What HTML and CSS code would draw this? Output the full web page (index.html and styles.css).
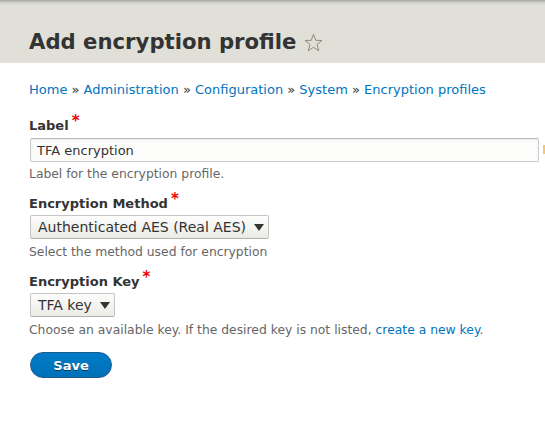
FILE: index.html
```html
<!DOCTYPE html>
<html>
<head>
<meta charset="utf-8">
<link rel="stylesheet" href="styles.css">
</head>
<body>
<header class="page-header">
  <h1 class="page-title">Add encryption profile <span class="star"><svg width="19" height="20" viewBox="0 0 19 20"><path d="M9.5 1.2 L11.7 7.3 L17.9 7.5 L13 11.4 L14.8 17.9 L9.5 14.2 L4.2 17.9 L6 11.4 L1.1 7.5 L7.3 7.3 Z" fill="none" stroke="#8c8c7e" stroke-width="1" stroke-linejoin="round"/></svg></span></h1>
</header>
<main class="content">
  <nav class="breadcrumb">
    <a href="#">Home</a> » <a href="#">Administration</a> » <a href="#">Configuration</a> » <a href="#">System</a> » <a href="#">Encryption profiles</a>
  </nav>
  <form class="form">
    <div class="field">
      <label class="label">Label<span class="req">*</span></label>
      <div class="input-row">
        <input class="text-input" type="text" value="TFA encryption">
        <span class="side-mark"></span>
      </div>
      <div class="desc">Label for the encryption profile.</div>
    </div>
    <div class="field field-select">
      <label class="label">Encryption Method<span class="req">*</span></label>
      <div class="select"><span>Authenticated AES (Real AES)</span><span class="arrow"></span></div>
      <div class="desc">Select the method used for encryption</div>
    </div>
    <div class="field field-select">
      <label class="label">Encryption Key<span class="req">*</span></label>
      <div class="select"><span>TFA key</span><span class="arrow"></span></div>
      <div class="desc">Choose an available key. If the desired key is not listed, <a href="#">create a new key</a>.</div>
    </div>
    <div class="actions">
      <button type="button" class="btn">Save</button>
    </div>
  </form>
</main>
</body>
</html>
```
FILE: styles.css
```css
html, body {
  margin: 0;
  padding: 0;
  background: #fff;
  font-family: "DejaVu Sans", sans-serif;
  font-size: 13px;
  color: #333;
}
.page-header {
  background: linear-gradient(#a4a4a0 0, #c8c8c2 2px, #dcdcd5 4px, #e0e0d8 6px);
  padding: 27px 29px 0;
  height: 36px;
  box-sizing: content-box;
}
.page-title {
  margin: 0;
  font-size: 21.2px;
  font-weight: bold;
  color: #333;
  line-height: 30px;
  display: flex;
  align-items: center;
  gap: 8px;
}
.star { display: inline-flex; margin-top: 1px; }
.content {
  padding: 17px 0 0 30px;
}
.breadcrumb {
  font-size: 13px;
  line-height: 20px;
  margin-bottom: 16px;
  margin-left: -1px;
}
a { color: #0074bd; text-decoration: none; }
.field { margin-bottom: 11px; }
.label {
  display: block;
  font-weight: bold;
  font-size: 13px;
  line-height: 18px;
  margin-bottom: 3px;
  margin-left: -1px;
}
.field-select .label { margin-bottom: 2px; }
.req { color: #e00; margin-left: 3px; position: relative; top: -4px; font-size: 15px; }
.input-row { display: flex; align-items: center; position: relative; }
.text-input {
  box-sizing: border-box;
  flex: 0 0 auto;
  width: 509px;
  height: 24px;
  margin: 0;
  border: 1px solid #ccc;
  border-top-color: #b8b8b8;
  border-radius: 2px;
  background: #fcfcfa;
  font-family: "DejaVu Sans", sans-serif;
  font-size: 13px;
  color: #333;
  padding: 1px 6px 0;
  box-shadow: inset 0 1px 2px rgba(0,0,0,0.08);
}
.side-mark {
  position: absolute;
  left: 513px;
  top: 7px;
  width: 2px;
  height: 9px;
  background: #f6c76a;
}
.desc {
  font-size: 12.35px;
  color: #666;
  line-height: 18px;
  margin-top: 3px;
  margin-left: -1px;
}
.field-select .desc { margin-top: 4px; }
.select {
  display: inline-flex;
  align-items: center;
  gap: 8px;
  box-sizing: border-box;
  height: 24px;
  padding: 0 2px 0 7px;
  border: 1px solid #c4c4c4;
  border-bottom-color: #b0b0b0;
  border-radius: 2px;
  background: linear-gradient(#fdfdfc, #eaeae6);
  font-size: 14px;
  color: #333;
}
.arrow {
  width: 0;
  height: 0;
  border-left: 5px solid transparent;
  border-right: 5px solid transparent;
  border-top: 7px solid #333;
  margin-right: 2px;
}
.actions { margin-top: 13px; }
.btn {
  display: block;
  background: linear-gradient(#007bc6, #0071b8);
  border: 1px solid #1e5c90;
  border-radius: 20em;
  color: #fff;
  font-family: "DejaVu Sans", sans-serif;
  font-weight: bold;
  font-size: 13px;
  width: 82px;
  height: 26px;
  padding: 0;
  margin: 0;
  text-shadow: 0 1px rgba(0,0,0,0.5);
}
```
